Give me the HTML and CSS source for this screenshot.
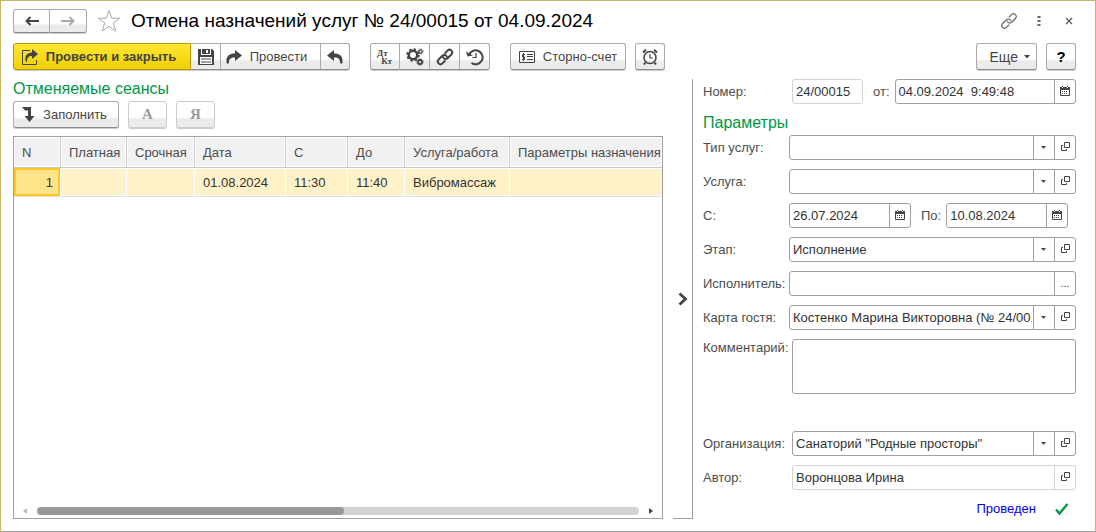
FILE: index.html
```html
<!DOCTYPE html>
<html lang="ru">
<head>
    <meta charset="UTF-8">
    <meta name="viewport" content="width=device-width, initial-scale=1.0">
    <title>Отмена назначений услуг</title>
    <link rel="stylesheet" href="styles.css">
</head>
<body>
    <svg class="sprite" aria-hidden="true">
        <symbol id="icon-open" viewBox="0 0 9 9">
            <path d="M3.500 .5h5v5h-5zM2 3.500H.5v5h5V7" fill="none" stroke="#444"/>
        </symbol>
        <symbol id="icon-calendar" viewBox="0 0 10 10">
            <path d="M.5 1.500h9v8h-9z" fill="#fff" stroke="#444"/>
            <path d="M0 1h10v3H0zM2 0h1v1H2zM7 0h1v1H7zM2 5h1v1H2zM4 5h1v1H4zM6 5h1v1H6zM2 7h1v1H2zM4 7h1v1H4zM6 7h1v1H6z" fill="#444"/>
            <path d="M2 1h1v1H2zM7 1h1v1H7z" fill="#fff"/>
        </symbol>
        <symbol id="icon-forward" viewBox="0 0 16 14">
            <path d="M9 0l7 5.500L9 11V7.500C5 7.300 3 8.500 2.800 13.500L.8 13.500C-.8 7 3 3.300 9 3.500z" fill="#444"/>
        </symbol>
        <symbol id="icon-link" viewBox="0 0 18 18">
            <g transform="rotate(-45 9 9)" fill="none" stroke-linecap="round">
                <path d="M6 11.700H2.700a2.700 2.700 0 0 1 0-5.400H8a2.700 2.700 0 0 1 2.500 3.700M12 6.300h3.300a2.700 2.700 0 0 1 0 5.400H10A2.700 2.700 0 0 1 7.500 8"/>
            </g>
        </symbol>
    </svg>

    <div class="window">
        <header class="titlebar">
            <div class="button-group nav">
                <button class="btn" aria-label="Назад">
                    <svg width="14" height="10" viewBox="0 0 14 10"><path d="M5.500 1L1.500 5l4 4M2 5h12" fill="none" stroke="#444" stroke-width="2"/></svg>
                </button>
                <button class="btn" aria-label="Вперед">
                    <svg width="14" height="10" viewBox="0 0 14 10"><path d="M8.500 1l4 4-4 4M12 5H0" fill="none" stroke="#aaa" stroke-width="2"/></svg>
                </button>
            </div>
            <button class="icon-button" aria-label="В избранное">
                <svg width="24" height="24" viewBox="0 0 24 24"><path d="M12 1.500l2.700 7.700h8L16.300 14l2.400 8L12 17.300 5.300 22l2.400-8L1.300 9.200h8z" fill="#fff" stroke="#aaa"/></svg>
            </button>
            <h1>Отмена назначений услуг № 24/00015 от 04.09.2024</h1>
            <div class="window-actions">
                <button class="icon-button" aria-label="Ссылка">
                    <svg class="link-thin" width="18" height="18"><use href="#icon-link"/></svg>
                </button>
                <button class="icon-button" aria-label="Меню">
                    <svg width="4" height="12" viewBox="0 0 4 12"><path d="M.5 1h3v2h-3zM.5 5h3v2h-3zM.5 9h3v2h-3z" fill="#666"/></svg>
                </button>
                <button class="icon-button" aria-label="Закрыть">
                    <svg width="8" height="8" viewBox="0 0 8 8"><path d="M1 1l6 6M7 1L1 7" stroke="#555" stroke-width="1.200"/></svg>
                </button>
            </div>
        </header>

        <div class="toolbar">
            <div class="button-group">
                <button class="btn primary">
                    <svg width="16" height="16" viewBox="0 0 16 16">
                        <path d="M8 1.500H.5v14h14V11" fill="none" stroke="#444"/>
                        <path d="M10 0l6 5-6 5V7C6.500 7 5 8.500 5 13H4C2 7 5 3.500 10 3.500z" fill="#444"/>
                    </svg>
                    Провести и закрыть
                </button>
                <button class="btn square" aria-label="Записать">
                    <svg width="16" height="16" viewBox="0 0 16 16">
                        <path d="M0 0h3v6h10V0h1l2 2v14H0z" fill="#444"/>
                        <path d="M4 0h8v5H4z" fill="#444"/>
                        <path d="M3 0h1v5h8V0h1v6H3zM8 1h2v3H8zM2 8h12v7H2z" fill="#fff"/>
                        <path d="M3 10h10M3 13h10" stroke="#444"/>
                    </svg>
                </button>
                <button class="btn post">
                    <svg width="16" height="14"><use href="#icon-forward"/></svg>
                    Провести
                </button>
                <button class="btn square undo" aria-label="Отмена проведения">
                    <svg class="flip" width="16" height="14"><use href="#icon-forward"/></svg>
                </button>
            </div>
            <div class="button-group">
                <button class="btn square dtkt" aria-label="Движения документа"><span>Дт</span><span>Кт</span></button>
                <button class="btn square" aria-label="Настройки">
                    <svg width="18" height="18" viewBox="0 0 18 18" fill="none" stroke="#444">
                        <circle cx="7" cy="7" r="4.200" stroke-width="2.400"/>
                        <circle cx="7" cy="7" r="5.800" stroke-width="1.800" stroke-dasharray="2.400 2.155"/>
                        <circle cx="14.500" cy="3.500" r="1.600" stroke-width="1.200"/>
                        <circle cx="14.500" cy="3.500" r="2.600" stroke-dasharray="1 1.042"/>
                        <circle cx="14" cy="14" r="2" stroke-width="1.800"/>
                        <circle cx="14" cy="14" r="3.200" stroke-dasharray="1.300 1.213"/>
                    </svg>
                </button>
                <button class="btn square" aria-label="Связанные документы">
                    <svg class="link-bold" width="18" height="18"><use href="#icon-link"/></svg>
                </button>
                <button class="btn square" aria-label="История">
                    <svg width="18" height="18" viewBox="0 0 18 18" fill="none" stroke="#444" stroke-width="2">
                        <path d="M3 7A7 7 0 1 1 5.500 15"/>
                        <path d="M0 3.500l1.500 5L7 7.500z" fill="#444" stroke="none"/>
                        <path d="M10 5v4.500H6.500" stroke-width="1.200"/>
                    </svg>
                </button>
            </div>
            <div class="toolbar-part">
                <button class="btn storno">
                    <svg width="16" height="12" viewBox="0 0 16 12">
                        <path d="M.5 .5h15v11H.5z" fill="none" stroke="#444"/>
                        <path d="M8 3.500h6M8 5.500h6M8 8.500h6" stroke="#444"/>
                        <path d="M6 3.500H3.500V6h2v2.500H3M4.500 2v8" fill="none" stroke="#444"/>
                    </svg>
                    Сторно-счет
                </button>
                <button class="btn square" aria-label="Напоминание">
                    <svg width="16" height="16" viewBox="0 0 16 16" fill="none" stroke="#444">
                        <circle cx="8" cy="8.500" r="6" stroke-width="1.600"/>
                        <path d="M8 5v4h3" stroke-width="1.200"/>
                        <path d="M1 3.500L4 .8M15 3.500L12 .8M3.500 13.500L2 15.500M12.500 13.500l1.500 2" stroke-width="2"/>
                    </svg>
                </button>
            </div>
            <div class="toolbar-part toolbar-end">
                <button class="btn more">
                    Еще
                    <svg width="6" height="4" viewBox="0 0 6 4"><path d="M0 0h6L3 3.500z" fill="#444"/></svg>
                </button>
                <button class="btn square help">?</button>
            </div>
        </div>

        <main class="content">
            <section class="sessions">
                <h2>Отменяемые сеансы</h2>
                <div class="session-tools">
                    <button class="btn fill">
                        <svg width="13" height="15" viewBox="0 0 13 15"><path d="M0 0h9v9h3.500L7.500 15 2.500 9H6V3.500H3z" fill="#444"/></svg>
                        Заполнить
                    </button>
                    <button class="btn letter" disabled>А</button>
                    <button class="btn letter" disabled>Я</button>
                </div>
                <div class="grid">
                    <table>
                        <colgroup>
                            <col class="col-n"><col class="col-paid"><col class="col-urgent"><col class="col-date">
                            <col class="col-from"><col class="col-to"><col class="col-service"><col>
                        </colgroup>
                        <thead>
                            <tr>
                                <th>N</th>
                                <th>Платная</th>
                                <th>Срочная</th>
                                <th>Дата</th>
                                <th>С</th>
                                <th>До</th>
                                <th>Услуга/работа</th>
                                <th>Параметры назначения</th>
                            </tr>
                        </thead>
                        <tbody>
                            <tr>
                                <td class="current">1</td>
                                <td></td>
                                <td></td>
                                <td>01.08.2024</td>
                                <td>11:30</td>
                                <td>11:40</td>
                                <td>Вибромассаж</td>
                                <td></td>
                            </tr>
                        </tbody>
                    </table>
                    <div class="scrollbar">
                        <svg width="4" height="6" viewBox="0 0 4 6"><path d="M4 0v6L0 3z" fill="#bbb"/></svg>
                        <div class="track"><div class="thumb"></div></div>
                        <svg width="4" height="6" viewBox="0 0 4 6"><path d="M0 0v6l4-3z" fill="#444"/></svg>
                    </div>
                </div>
            </section>

            <div class="splitter">
                <button class="icon-button" aria-label="Свернуть панель">
                    <svg width="10" height="14" viewBox="0 0 10 14"><path d="M1.500 1.500L7.500 7l-6 5.500" fill="none" stroke="#444" stroke-width="2.800"/></svg>
                </button>
            </div>

            <form class="params">
                <div class="row wide-label">
                    <label for="number">Номер:</label>
                    <div class="field readonly number"><input id="number" type="text" value="24/00015" readonly></div>
                    <label class="inline" for="doc-date">от:</label>
                    <div class="field">
                        <input id="doc-date" type="text" value="04.09.2024  9:49:48">
                        <button type="button" aria-label="Календарь"><svg width="10" height="10"><use href="#icon-calendar"/></svg></button>
                    </div>
                </div>
                <h2>Параметры</h2>
                <div class="row">
                    <label for="type">Тип услуг:</label>
                    <div class="field">
                        <select id="type"><option></option></select>
                        <button type="button" aria-label="Открыть"><svg width="9" height="9"><use href="#icon-open"/></svg></button>
                    </div>
                </div>
                <div class="row">
                    <label for="service">Услуга:</label>
                    <div class="field">
                        <select id="service"><option></option></select>
                        <button type="button" aria-label="Открыть"><svg width="9" height="9"><use href="#icon-open"/></svg></button>
                    </div>
                </div>
                <div class="row">
                    <label for="from">С:</label>
                    <div class="field date">
                        <input id="from" type="text" value="26.07.2024">
                        <button type="button" aria-label="Календарь"><svg width="10" height="10"><use href="#icon-calendar"/></svg></button>
                    </div>
                    <label class="inline" for="to">По:</label>
                    <div class="field date">
                        <input id="to" type="text" value="10.08.2024">
                        <button type="button" aria-label="Календарь"><svg width="10" height="10"><use href="#icon-calendar"/></svg></button>
                    </div>
                </div>
                <div class="row">
                    <label for="stage">Этап:</label>
                    <div class="field">
                        <select id="stage"><option>Исполнение</option></select>
                        <button type="button" aria-label="Открыть"><svg width="9" height="9"><use href="#icon-open"/></svg></button>
                    </div>
                </div>
                <div class="row">
                    <label for="performer">Исполнитель:</label>
                    <div class="field">
                        <input id="performer" type="text">
                        <button type="button" aria-label="Выбрать">...</button>
                    </div>
                </div>
                <div class="row">
                    <label for="card">Карта гостя:</label>
                    <div class="field">
                        <select id="card"><option>Костенко Марина Викторовна (№ 24/00152)</option></select>
                        <button type="button" aria-label="Открыть"><svg width="9" height="9"><use href="#icon-open"/></svg></button>
                    </div>
                </div>
                <div class="row wide-label comment">
                    <label for="comment">Комментарий:</label>
                    <textarea id="comment"></textarea>
                </div>
                <div class="row wide-label">
                    <label for="org">Организация:</label>
                    <div class="field">
                        <select id="org"><option>Санаторий "Родные просторы"</option></select>
                        <button type="button" aria-label="Открыть"><svg width="9" height="9"><use href="#icon-open"/></svg></button>
                    </div>
                </div>
                <div class="row wide-label">
                    <label for="author">Автор:</label>
                    <div class="field readonly">
                        <input id="author" type="text" value="Воронцова Ирина" readonly>
                        <button type="button" aria-label="Открыть"><svg width="9" height="9"><use href="#icon-open"/></svg></button>
                    </div>
                </div>
                <div class="status">
                    <span>Проведен</span>
                    <svg width="14" height="12" viewBox="0 0 14 12"><path d="M1 6.500l3.500 4L12.500 1" fill="none" stroke="#009646" stroke-width="2.400"/></svg>
                </div>
            </form>
        </main>
    </div>
</body>
</html>
```
FILE: styles.css
```css
:root {
    --window-border: #c8b464;
    --border: #a0a0a0;
    --border-light: #d3d3d3;
    --text: #333;
    --label: #4d4d4d;
    --green: #009646;
}

* {
    margin: 0;
    padding: 0;
    box-sizing: border-box;
}

body {
    font-family: "Liberation Sans", Arial, sans-serif;
    font-size: 13px;
    color: var(--text);
    background-color: white;
}

button,
input,
select,
textarea {
    font: inherit;
    color: inherit;
}

svg {
    flex: none;
}

.sprite {
    display: none;
}

.window {
    min-height: 100vh;
    display: flex;
    flex-direction: column;
    padding: 8px 19px 12px 12px;
    border: 1px solid var(--window-border);
    border-bottom-color: var(--border);
}

/* Title bar */
.titlebar {
    display: flex;
    align-items: center;
    height: 24px;
    margin-bottom: 10px;
}

.titlebar h1 {
    font-size: 19px;
    font-weight: normal;
    color: black;
    white-space: nowrap;
    margin-left: 10px;
}

.nav {
    height: 24px;
    margin-right: 10px;
}

.nav .btn {
    width: 37px;
}

.icon-button {
    display: flex;
    align-items: center;
    justify-content: center;
    border: none;
    background: none;
    cursor: pointer;
}

.window-actions {
    display: flex;
    align-items: center;
    gap: 15px;
    margin-left: auto;
}

.window-actions .icon-button {
    width: 15px;
}

.link-thin {
    stroke: #666;
    stroke-width: 1.2;
}

.link-bold {
    stroke: #444;
    stroke-width: 2;
}

/* Buttons */
.btn {
    display: flex;
    align-items: center;
    justify-content: center;
    gap: 8px;
    height: 27px;
    padding: 0 12px 0 6px;
    border: 1px solid #aaa;
    border-bottom-color: #8c8c8c;
    border-radius: 3px;
    background: linear-gradient(#fff 60%, #ebebeb 70%, #ebebeb);
    box-shadow: 0 1px 0 #ccc;
    color: #444;
    white-space: nowrap;
    cursor: pointer;
}

.nav .btn {
    height: 24px;
    padding: 0;
}

.square {
    width: 30px;
    padding: 0;
}

.primary {
    width: 178px;
    padding: 0 10px 0 4px;
    font-weight: bold;
    border-color: #b49b00;
    background: linear-gradient(#ffe633, #f0d000);
}

.post {
    width: 100px;
    padding: 0 12px 0 4px;
}

.undo {
    width: 29px;
}

.storno {
    width: 116px;
    padding: 0 6px;
}

.button-group {
    display: flex;
}

.button-group .btn:not(:first-child) {
    border-left: none;
    border-top-left-radius: 0;
    border-bottom-left-radius: 0;
}

.button-group .btn:not(:last-child) {
    border-top-right-radius: 0;
    border-bottom-right-radius: 0;
}

.flip {
    transform: scaleX(-1);
}

.toolbar {
    display: flex;
    gap: 20px;
    margin-bottom: 9px;
}

.toolbar-part {
    display: flex;
    gap: 9px;
}

.toolbar-end {
    margin-left: auto;
}

.dtkt {
    flex-direction: column;
    gap: 0;
    font-family: "Liberation Serif", serif;
    font-size: 9px;
    font-weight: bold;
    line-height: 8px;
}

.dtkt span:first-child {
    align-self: flex-start;
    margin-left: 6px;
}

.dtkt span:last-child {
    align-self: flex-end;
    margin-right: 7px;
}

.more {
    gap: 6px;
    padding: 0 6px 0 13px;
    font-size: 14px;
}

.help {
    font-size: 15px;
    font-weight: bold;
    color: black;
}

/* Content */
.content {
    flex: 1;
    display: grid;
    grid-template-columns: minmax(0, 650fr) 30px minmax(0, 383fr);
}

h2 {
    font-size: 16px;
    font-weight: normal;
    line-height: 20px;
    color: var(--green);
}

.sessions {
    display: flex;
    flex-direction: column;
}

.session-tools {
    display: flex;
    gap: 9px;
    margin: 2px 0 8px;
}

.fill {
    width: 106px;
    padding: 0 11px 0 8px;
}

.letter {
    width: 39px;
    padding: 0;
    font-family: "Liberation Serif", serif;
    font-size: 15px;
    font-weight: bold;
    color: #999;
    border-color: #ccc;
    cursor: default;
}

.grid {
    flex: 1;
    display: flex;
    flex-direction: column;
    border: 1px solid var(--border);
    overflow: hidden;
}

table {
    width: 100%;
    table-layout: fixed;
    border-collapse: separate;
    border-spacing: 0;
}

.col-n { width: 47px; }
.col-paid { width: 66px; }
.col-urgent { width: 68px; }
.col-date { width: 91px; }
.col-from { width: 62px; }
.col-to { width: 57px; }
.col-service { width: 105px; }

th,
td {
    padding: 0 0 0 8px;
    text-align: left;
    font-weight: normal;
    white-space: nowrap;
    overflow: hidden;
}

th {
    height: 31px;
    color: var(--label);
    background-color: #f1f1f1;
    border-right: 1px solid #c8c8c8;
    border-bottom: 1px solid #c8c8c8;
    box-shadow: inset 0 0 0 1px white;
}

td {
    height: 29px;
    background-color: #fff2c8;
    border-right: 1px solid white;
    border-bottom: 1px solid #e0e0e0;
    box-shadow: inset 0 1px 0 white, inset 0 -1px 0 white;
}

th:last-child,
td:last-child {
    border-right: none;
}

td.current {
    padding-right: 7px;
    text-align: right;
    background-color: #ffe48c;
    box-shadow: inset 0 0 0 2px #ffc81e;
}

.scrollbar {
    display: flex;
    align-items: center;
    gap: 10px;
    margin-top: auto;
    padding: 3px 9px;
}

.track {
    flex: 1;
    height: 8px;
    border-radius: 4px;
    background-color: #d3d3d3;
}

.thumb {
    width: 51%;
    height: 100%;
    border-radius: 4px;
    background-color: #999;
}

.splitter {
    display: flex;
    align-items: center;
    justify-content: flex-end;
    margin-left: 10px;
    padding-right: 4px;
    border-right: 1px solid var(--border);
    border-bottom: 1px solid var(--border);
}

/* Parameters */
.params {
    padding-left: 10px;
}

.params h2 {
    margin-bottom: 2px;
}

.row {
    display: flex;
    align-items: center;
    margin-bottom: 9px;
}

.row label {
    flex: none;
    width: 86px;
    color: var(--label);
}

.wide-label label {
    width: 89px;
}

.row label.inline {
    width: auto;
    margin: 0 5px 0 10px;
}

.field {
    flex: 1;
    min-width: 0;
    display: flex;
    height: 25px;
    border: 1px solid var(--border);
    border-radius: 3px;
    background-color: white;
}

.field.readonly,
.field.readonly button {
    border-color: var(--border-light);
}

.field.number {
    flex: none;
    width: 71px;
}

.field.date {
    flex: none;
    width: 122px;
}

.field input,
.field select {
    flex: 1;
    width: 0;
    min-width: 0;
    padding: 0 3px;
    border: none;
    outline: none;
    background-color: transparent;
    white-space: pre;
}

.field select {
    appearance: none;
    padding-right: 22px;
    background-image:
        url("data:image/svg+xml,%3Csvg xmlns='http://www.w3.org/2000/svg' width='5' height='3'%3E%3Cpath d='M0 0h5L2.500 3z' fill='%23444'/%3E%3C/svg%3E"),
        linear-gradient(var(--border), var(--border));
    background-repeat: no-repeat;
    background-position: right 8px center, right 20px top;
    background-size: 5px 3px, 1px 100%;
}

.field button {
    flex: none;
    display: flex;
    align-items: center;
    justify-content: center;
    width: 21px;
    padding-bottom: 2px;
    border: none;
    border-left: 1px solid var(--border);
    background: none;
    font-size: 11px;
    cursor: pointer;
}

.comment {
    align-items: flex-start;
    margin-bottom: 37px;
}

.comment label {
    line-height: 17px;
}

textarea {
    flex: 1;
    min-width: 0;
    height: 55px;
    padding: 3px;
    border: 1px solid var(--border);
    border-radius: 3px;
    resize: none;
}

.status {
    display: flex;
    align-items: center;
    justify-content: flex-end;
    gap: 19px;
    padding-right: 7px;
    line-height: 19px;
    color: #0000e6;
}
```
